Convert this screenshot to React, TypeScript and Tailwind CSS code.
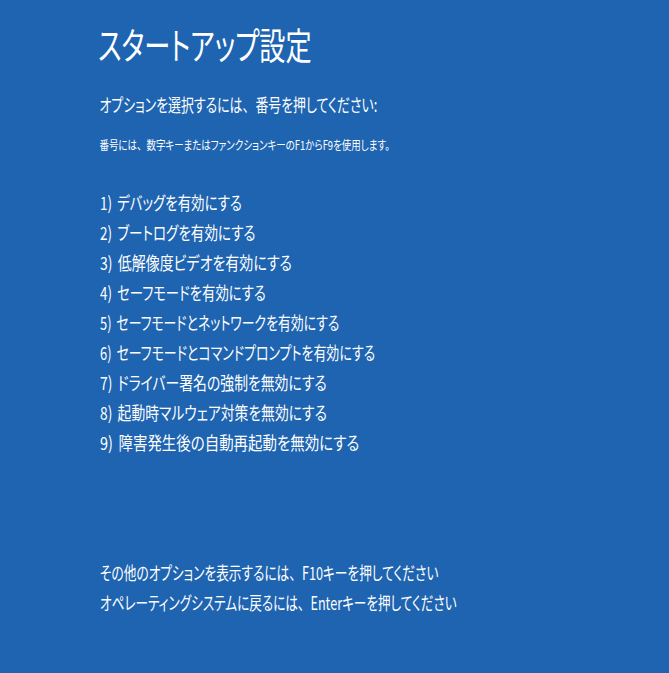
const Comma = () => <span className="[font-feature-settings:normal]">、</span>;

export default function App() {
  const items: [string, string, string][] = [
    ["1)", "デバッグを有効にする", "scale-x-[0.747]"],
    ["2)", "ブートログを有効にする", "scale-x-[0.752]"],
    ["3)", "低解像度ビデオを有効にする", "scale-x-[0.776]"],
    ["4)", "セーフモードを有効にする", "scale-x-[0.742]"],
    ["5)", "セーフモードとネットワークを有効にする", "scale-x-[0.716]"],
    ["6)", "セーフモードとコマンドプロンプトを有効にする", "scale-x-[0.719]"],
    ["7)", "ドライバー署名の強制を無効にする", "scale-x-[0.769]"],
    ["8)", "起動時マルウェア対策を無効にする", "scale-x-[0.766]"],
    ["9)", "障害発生後の自動再起動を無効にする", "scale-x-[0.803]"],
  ];
  return (
    <div
      className="w-[669px] h-[673px] bg-[#1e64b1] text-white overflow-hidden pl-[98px] pt-[22px] flex flex-col whitespace-nowrap [font-feature-settings:'palt']"
      style={{ fontFamily: '"Noto Sans CJK JP", "Noto Sans", sans-serif' }}
    >
      <div className="text-[37px] leading-[44px] origin-left scale-x-[0.707]">スタートアップ設定</div>
      <div className="mt-[23px] pl-[2px] text-[18px] leading-[30px] origin-left scale-x-[0.717]">
        オプションを選択するには<Comma />番号を押してください:
      </div>
      <div className="mt-[16px] pl-[2px] text-[12.5px] leading-[20px] origin-left scale-x-[0.757]">
        番号には<Comma />数字キーまたはファンクションキーのF1からF9を使用します。
      </div>
      <div className="mt-[32px] pl-[2px] flex flex-col">
        {items.map(([n, t, s]) => (
          <div key={n} className={`text-[18px] leading-[30px] origin-left flex ${s}`}>
            <span className="w-[23px]">{n}</span>
            <span>{t}</span>
          </div>
        ))}
      </div>
      <div className="mt-[100px] pl-[2px] flex flex-col">
        <div className="text-[18px] leading-[30px] origin-left scale-x-[0.705]">
          その他のオプションを表示するには<Comma />F10キーを押してください
        </div>
        <div className="text-[18px] leading-[30px] origin-left scale-x-[0.701]">
          オペレーティングシステムに戻るには<Comma />Enterキーを押してください
        </div>
      </div>
    </div>
  );
}
